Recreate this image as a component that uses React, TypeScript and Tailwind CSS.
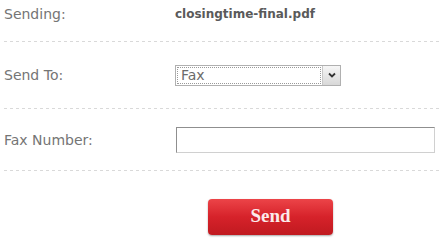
import React from "react";

function Divider() {
  return (
    <div className="ml-[4px] h-px w-[436px] bg-[repeating-linear-gradient(to_right,#d9d9d9_0_3px,transparent_3px_6px)]" />
  );
}

export default function App() {
  return (
    <div className="w-[440px] h-[246px] bg-white font-['DejaVu_Sans',sans-serif] text-[14px] text-[#757575] overflow-hidden">
      <div className="flex h-[41px] pt-[5px]">
        <div className="w-[175px] pl-[4px] leading-[18px]">Sending:</div>
        <div className="font-bold text-[12px] leading-[18px] text-[#5a5a5a]">closingtime-final.pdf</div>
      </div>
      <Divider />
      <div className="flex h-[66px] items-center">
        <div className="w-[175px] pl-[4px] leading-[18px]">Send To:</div>
        <div className="flex h-[21px] w-[166px] border border-[#b0b0b0] bg-white">
          <div className="m-px flex-1 border border-dotted border-[#9a9a9a] flex items-center pl-[3px] text-[#6b6b6b] text-[14px] leading-none">
            Fax
          </div>
          <div className="w-[18px] flex items-center justify-center border-l border-[#c8c8c8] bg-[linear-gradient(#f6f6f6,#d8d8d8)]">
            <svg width="8" height="6" viewBox="0 0 8 6">
              <path d="M1 1.5 L4 4.5 L7 1.5" fill="none" stroke="#333" strokeWidth="1.8" />
            </svg>
          </div>
        </div>
      </div>
      <Divider />
      <div className="flex h-[61px] items-center">
        <div className="w-[176px] pl-[4px] leading-[18px]">Fax Number:</div>
        <div className="h-[26px] w-[259px] border border-t-[#8f8f8f] border-l-[#8f8f8f] border-r-[#d0d0d0] border-b-[#d0d0d0] bg-white" />
      </div>
      <Divider />
      <div className="flex pt-[28px]">
        <div className="ml-[208px] w-[125px] h-[36px] rounded-[4px] bg-[linear-gradient(#ec4448,#d6222a_50%,#c01a20)] shadow-[0_1px_2px_rgba(0,0,0,0.35)] flex items-center justify-center pb-px font-['Liberation_Serif',serif] font-bold text-[19px] text-[#fbeaea]">
          Send
        </div>
      </div>
    </div>
  );
}
